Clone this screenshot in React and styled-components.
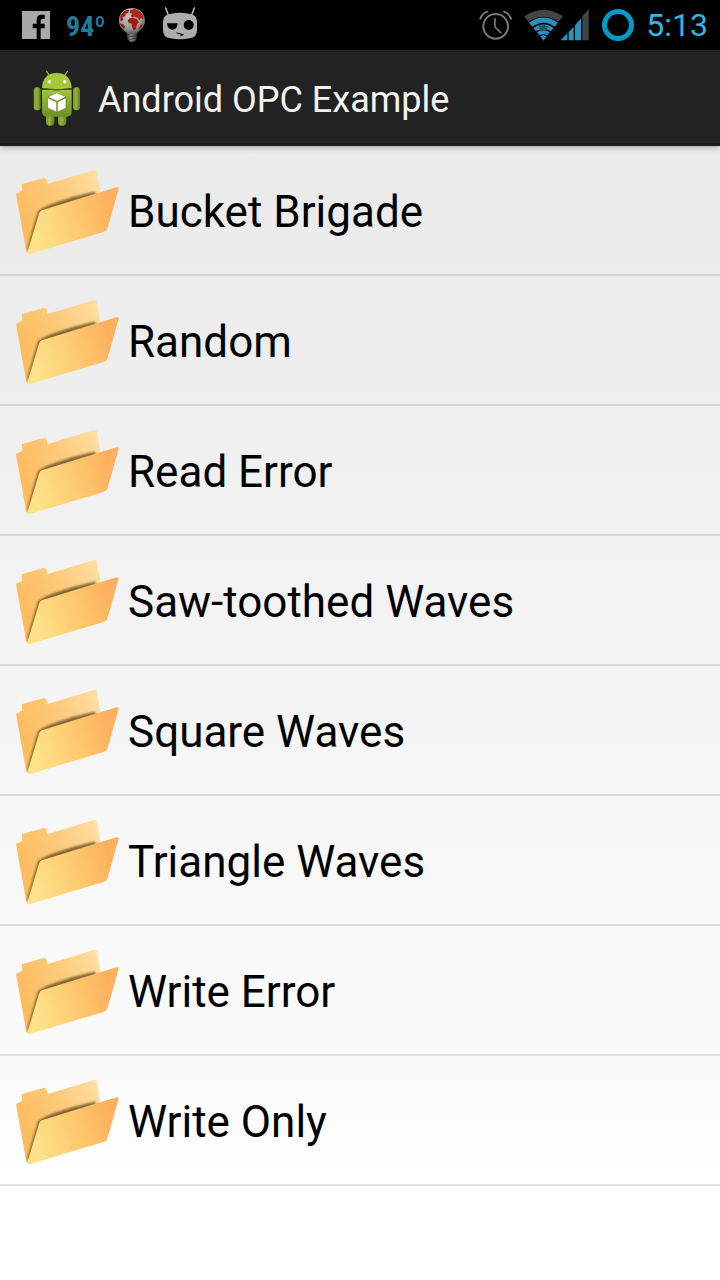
import React from "react";
import styled, { createGlobalStyle } from "styled-components";

const GlobalStyle = createGlobalStyle`
  * { box-sizing: border-box; }
  body {
    margin: 0;
    background: #fff;
    font-family: Roboto, "Liberation Sans", sans-serif;
  }
`;

const Screen = styled.div`
  display: flex;
  flex-direction: column;
  min-height: 100vh;
`;

const StatusBar = styled.div`
  display: flex;
  justify-content: space-between;
  height: 50px;
  padding: 0 12px 0 20px;
  background: #000;
`;

const StatusGroup = styled.div`
  display: flex;
  align-items: center;
  gap: ${(p) => p.$gap}px;
`;

const Temperature = styled.span`
  width: 36px;
  padding-top: 4px;
  color: #207a9c;
  font-family: "Roboto Condensed", Roboto, sans-serif;
  font-size: 28px;
  font-weight: 700;
  line-height: 46px;
  white-space: nowrap;
`;

const Degree = styled.span`
  font-weight: 400;
`;

const Clock = styled.time`
  color: #33b5e5;
  font-size: 32px;
  line-height: 50px;
`;

const ActionBar = styled.header`
  position: relative;
  display: flex;
  align-items: center;
  gap: 12px;
  height: 96px;
  padding: 0 28px;
  background: #222;
  border-bottom: 3px solid #1a1a1a;
  box-shadow: 0 1px 6px rgba(0, 0, 0, 0.35);
`;

const Title = styled.h1`
  margin: 0;
  padding-top: 6px;
  color: #f3f3f3;
  font-size: 36px;
  font-weight: 400;
  line-height: 48px;
`;

const Content = styled.main`
  flex: 1;
  background: linear-gradient(#ebebeb 0%, #ececec 10%, #f3f3f3 40%, #fafafa 74%, #fefefe 92%, #fff 100%);
`;

const FolderList = styled.ul`
  margin: 0;
  padding: 0;
  list-style: none;
`;

const FolderItem = styled.li`
  border-bottom: 2px solid rgba(0, 0, 0, 0.11);
`;

const FolderButton = styled.button`
  display: flex;
  align-items: center;
  gap: 8px;
  width: 100%;
  height: 128px;
  padding: 0 15px;
  border: 0;
  background: none;
  color: #000;
  font: inherit;
  font-size: 44px;
  line-height: 52px;
  text-align: left;
`;

const FolderName = styled.span`
  padding-top: 4px;
`;

const Icon = styled.svg`
  display: block;
  flex: none;
`;

function FolderIcon() {
  return (
    <Icon width="105" height="92" viewBox="45 42 315 276" aria-hidden="true">
      <path d="M48 132 L67 122 L65 103 L133 83 L139 87 L143 102 L284 59 L290 62 L301 128 L86 312 L79 306Z" fill="url(#folderBack)" />
      <path d="M284 59 L290 62 L300 127 L292 128 L281 62Z" fill="#ffe0a8" opacity=".5" />
      <path d="M114 184 C135 166 205 142 284 125 L290 134 L126 186 L90 292 L80 304 C92 258 103 222 114 184Z" fill="#5a451c" opacity=".75" filter="url(#foldShade)" />
      <path d="M126 181 Q119 183 117 191 L82 308 Q82 315 91 312 L313 245 Q321 242 323 233 L356 116 Q356 110 349 112Z" fill="url(#folderFront)" />
    </Icon>
  );
}

function FolderPaint() {
  return (
    <Icon width="0" height="0" aria-hidden="true">
      <defs>
        <linearGradient id="folderBack" gradientUnits="userSpaceOnUse" x1="70" y1="190" x2="290" y2="80">
          <stop offset="0" stopColor="#fcbd61" />
          <stop offset=".45" stopColor="#fdc877" />
          <stop offset="1" stopColor="#ffdda0" />
        </linearGradient>
        <linearGradient id="folderFront" gradientUnits="userSpaceOnUse" x1="105" y1="250" x2="335" y2="180">
          <stop offset="0" stopColor="#fee289" />
          <stop offset=".5" stopColor="#fdcb71" />
          <stop offset="1" stopColor="#fdb05d" />
        </linearGradient>
        <filter id="foldShade" x="-10%" y="-10%" width="120%" height="120%">
          <feGaussianBlur stdDeviation="3" />
        </filter>
      </defs>
    </Icon>
  );
}

function FacebookIcon() {
  return (
    <Icon width="32" height="32" viewBox="0 0 96 96" aria-label="Facebook" role="img">
      <path fill="#a9a9a9" d="M6 6H90V90H62V58H74V44H62V36Q62 30 68 30H74V17H64Q50 17 50 33V44H38V58H50V90H6Z" />
    </Icon>
  );
}

function GlobeBulbIcon() {
  return (
    <Icon width="32" height="36" viewBox="0 0 96 108" aria-label="Globe bulb" role="img">
      <defs>
        <radialGradient id="globe" cx=".42" cy=".35" r=".65">
          <stop offset="0" stopColor="#c4c4c4" />
          <stop offset=".7" stopColor="#999" />
          <stop offset="1" stopColor="#5c5c5c" />
        </radialGradient>
        <linearGradient id="bulbBase">
          <stop offset="0" stopColor="#333" />
          <stop offset=".4" stopColor="#888" />
          <stop offset="1" stopColor="#2b2b2b" />
        </linearGradient>
      </defs>
      <path d="M31 72H65L61 97L54 104H43L35 97Z" fill="url(#bulbBase)" />
      <path d="M34 82L62 78M35 90L61 86M38 98L58 94" stroke="#333" strokeWidth="2" />
      <path d="M48 3C26 3 9 19 9 41C9 58 20 65 30 77Q48 84 65 77C75 65 87 58 87 41C87 19 70 3 48 3Z" fill="url(#globe)" />
      <path d="M13 28Q19 14 33 8L40 9L36 17L28 20L29 26L20 31L22 39L13 43Z" fill="#a51c14" />
      <path d="M43 10L55 5Q77 12 83 29L82 37L75 34L70 39L64 32L56 29L49 32L44 26L49 21L42 17Z" fill="#b0251b" />
      <path d="M40 34L51 32L63 37L69 46L63 52L60 65L53 71L48 59L47 50L38 48L35 41Z" fill="#a01c14" />
      <path d="M11 49L21 52L28 60L24 65Q13 59 11 49ZM74 52L80 55L73 64L68 66Z" fill="#981810" />
    </Icon>
  );
}

function CidIcon() {
  return (
    <Icon width="36" height="36" viewBox="0 6 108 108" aria-label="CyanogenMod" role="img">
      <path d="M11 9L19 30M97 9L89 30" stroke="#adadad" strokeWidth="5" strokeLinecap="round" />
      <path d="M27 26Q54 21 81 26Q105 29 105 49V76Q105 97 83 100Q54 106 25 100Q3 97 3 76V49Q3 29 27 26Z" fill="#adadad" />
      <path d="M15 55H47Q46 74 31 74Q16 73 15 55Z" />
      <circle cx="80" cy="60" r="15" />
      <path d="M45 84L64 89L56 92" fill="none" stroke="#000" strokeWidth="3" strokeLinecap="round" />
    </Icon>
  );
}

function AlarmIcon() {
  return (
    <Icon width="34" height="32" viewBox="0 0 102 96" aria-label="Alarm set" role="img">
      <g fill="none" stroke="#777" strokeLinecap="round">
        <circle cx="53" cy="52" r="37" strokeWidth="6" />
        <path d="M51 29V54L68 71" strokeWidth="5" />
        <path d="M7 29Q13 13 28 8M78 8Q93 13 99 29" strokeWidth="6" />
      </g>
    </Icon>
  );
}

function SignalIcon() {
  return (
    <Icon width="66" height="32" viewBox="0 0 198 96" aria-label="Wi-Fi and mobile signal" role="img">
      <path d="M0 22Q58 -17 117 22L104 38Q58 8 13 38Z" fill="#444" />
      <path d="M15 41Q58 10 102 41L92 53Q58 29 25 53Z" fill="#2a91bd" />
      <path d="M28 57Q58 35 89 57L81 67Q58 51 36 67Z" fill="#2a91bd" />
      <path d="M39 70Q58 57 78 70L70 79Q58 72 47 79Z" fill="#2a91bd" />
      <path d="M49 82Q58 76 68 82L58 95Z" fill="#2a91bd" />
      <path d="M43 49L53 52V46H64V52L73 49L65 66H51Z" fill="#225266" />
      <path d="M110 94L130 73V94ZM134 69L149 53V94H134ZM153 49L171 28V94H153Z" fill="#2a91bd" />
      <path d="M175 22L194 0V94H175Z" fill="#444" />
    </Icon>
  );
}

function BatteryIcon() {
  return (
    <Icon width="32" height="32" viewBox="0 0 32 32" aria-label="Battery full" role="img">
      <circle cx="16" cy="16" r="13.5" fill="none" stroke="#0099cc" strokeWidth="5" />
    </Icon>
  );
}

function AndroidIcon() {
  return (
    <Icon width="58" height="60" viewBox="24 35 174 180" aria-hidden="true">
      <defs>
        <linearGradient id="droid" x1="0" x2="0" y1="0" y2="1">
          <stop offset="0" stopColor="#a0c436" />
          <stop offset=".7" stopColor="#7f9f2c" />
          <stop offset="1" stopColor="#6f8f28" />
        </linearGradient>
        <linearGradient id="limb">
          <stop offset="0" stopColor="#76952b" />
          <stop offset=".4" stopColor="#94b536" />
          <stop offset="1" stopColor="#5f7c24" />
        </linearGradient>
      </defs>
      <path d="M80 48L89 62M142 48L133 62" stroke="#91b535" strokeWidth="4" strokeLinecap="round" />
      <rect x="41" y="96" width="21" height="69" rx="9" fill="url(#limb)" />
      <rect x="159" y="96" width="21" height="69" rx="9" fill="url(#limb)" />
      <rect x="78" y="166" width="25" height="45" rx="11" fill="url(#limb)" />
      <rect x="114" y="166" width="25" height="45" rx="11" fill="url(#limb)" />
      <path d="M66 103H155V170Q155 184 140 184H82Q66 184 66 169Z" fill="url(#droid)" />
      <path d="M66 98Q68 54 110 53Q152 54 155 98Q111 105 66 98Z" fill="#a4ca3b" />
      <path d="M66 100Q111 108 155 100" fill="none" stroke="#486018" strokeWidth="3" />
      <circle cx="88" cy="79" r="5" fill="#fff" />
      <circle cx="134" cy="79" r="5" fill="#fff" />
      <path d="M110 112L139 124V157L111 172L84 158V124Z" fill="#4f6c1b" opacity=".6" />
      <path d="M110 113L136 124L111 137L86 125ZM84 129L109 141V169L84 157ZM113 141L137 129V157L113 169Z" fill="#fff" />
    </Icon>
  );
}

const folders = [
  "Bucket Brigade",
  "Random",
  "Read Error",
  "Saw-toothed Waves",
  "Square Waves",
  "Triangle Waves",
  "Write Error",
  "Write Only",
];

export default function App() {
  return (
    <Screen>
      <GlobalStyle />
      <FolderPaint />
      <StatusBar>
        <StatusGroup $gap={14}>
          <FacebookIcon />
          <Temperature>94<Degree>º</Degree></Temperature>
          <GlobeBulbIcon />
          <CidIcon />
        </StatusGroup>
        <StatusGroup $gap={12}>
          <AlarmIcon />
          <SignalIcon />
          <BatteryIcon />
          <Clock>5:13</Clock>
        </StatusGroup>
      </StatusBar>
      <ActionBar>
        <AndroidIcon />
        <Title>Android OPC Example</Title>
      </ActionBar>
      <Content>
        <FolderList>
          {folders.map((name) => (
            <FolderItem key={name}>
              <FolderButton type="button">
                <FolderIcon />
                <FolderName>{name}</FolderName>
              </FolderButton>
            </FolderItem>
          ))}
        </FolderList>
      </Content>
    </Screen>
  );
}
